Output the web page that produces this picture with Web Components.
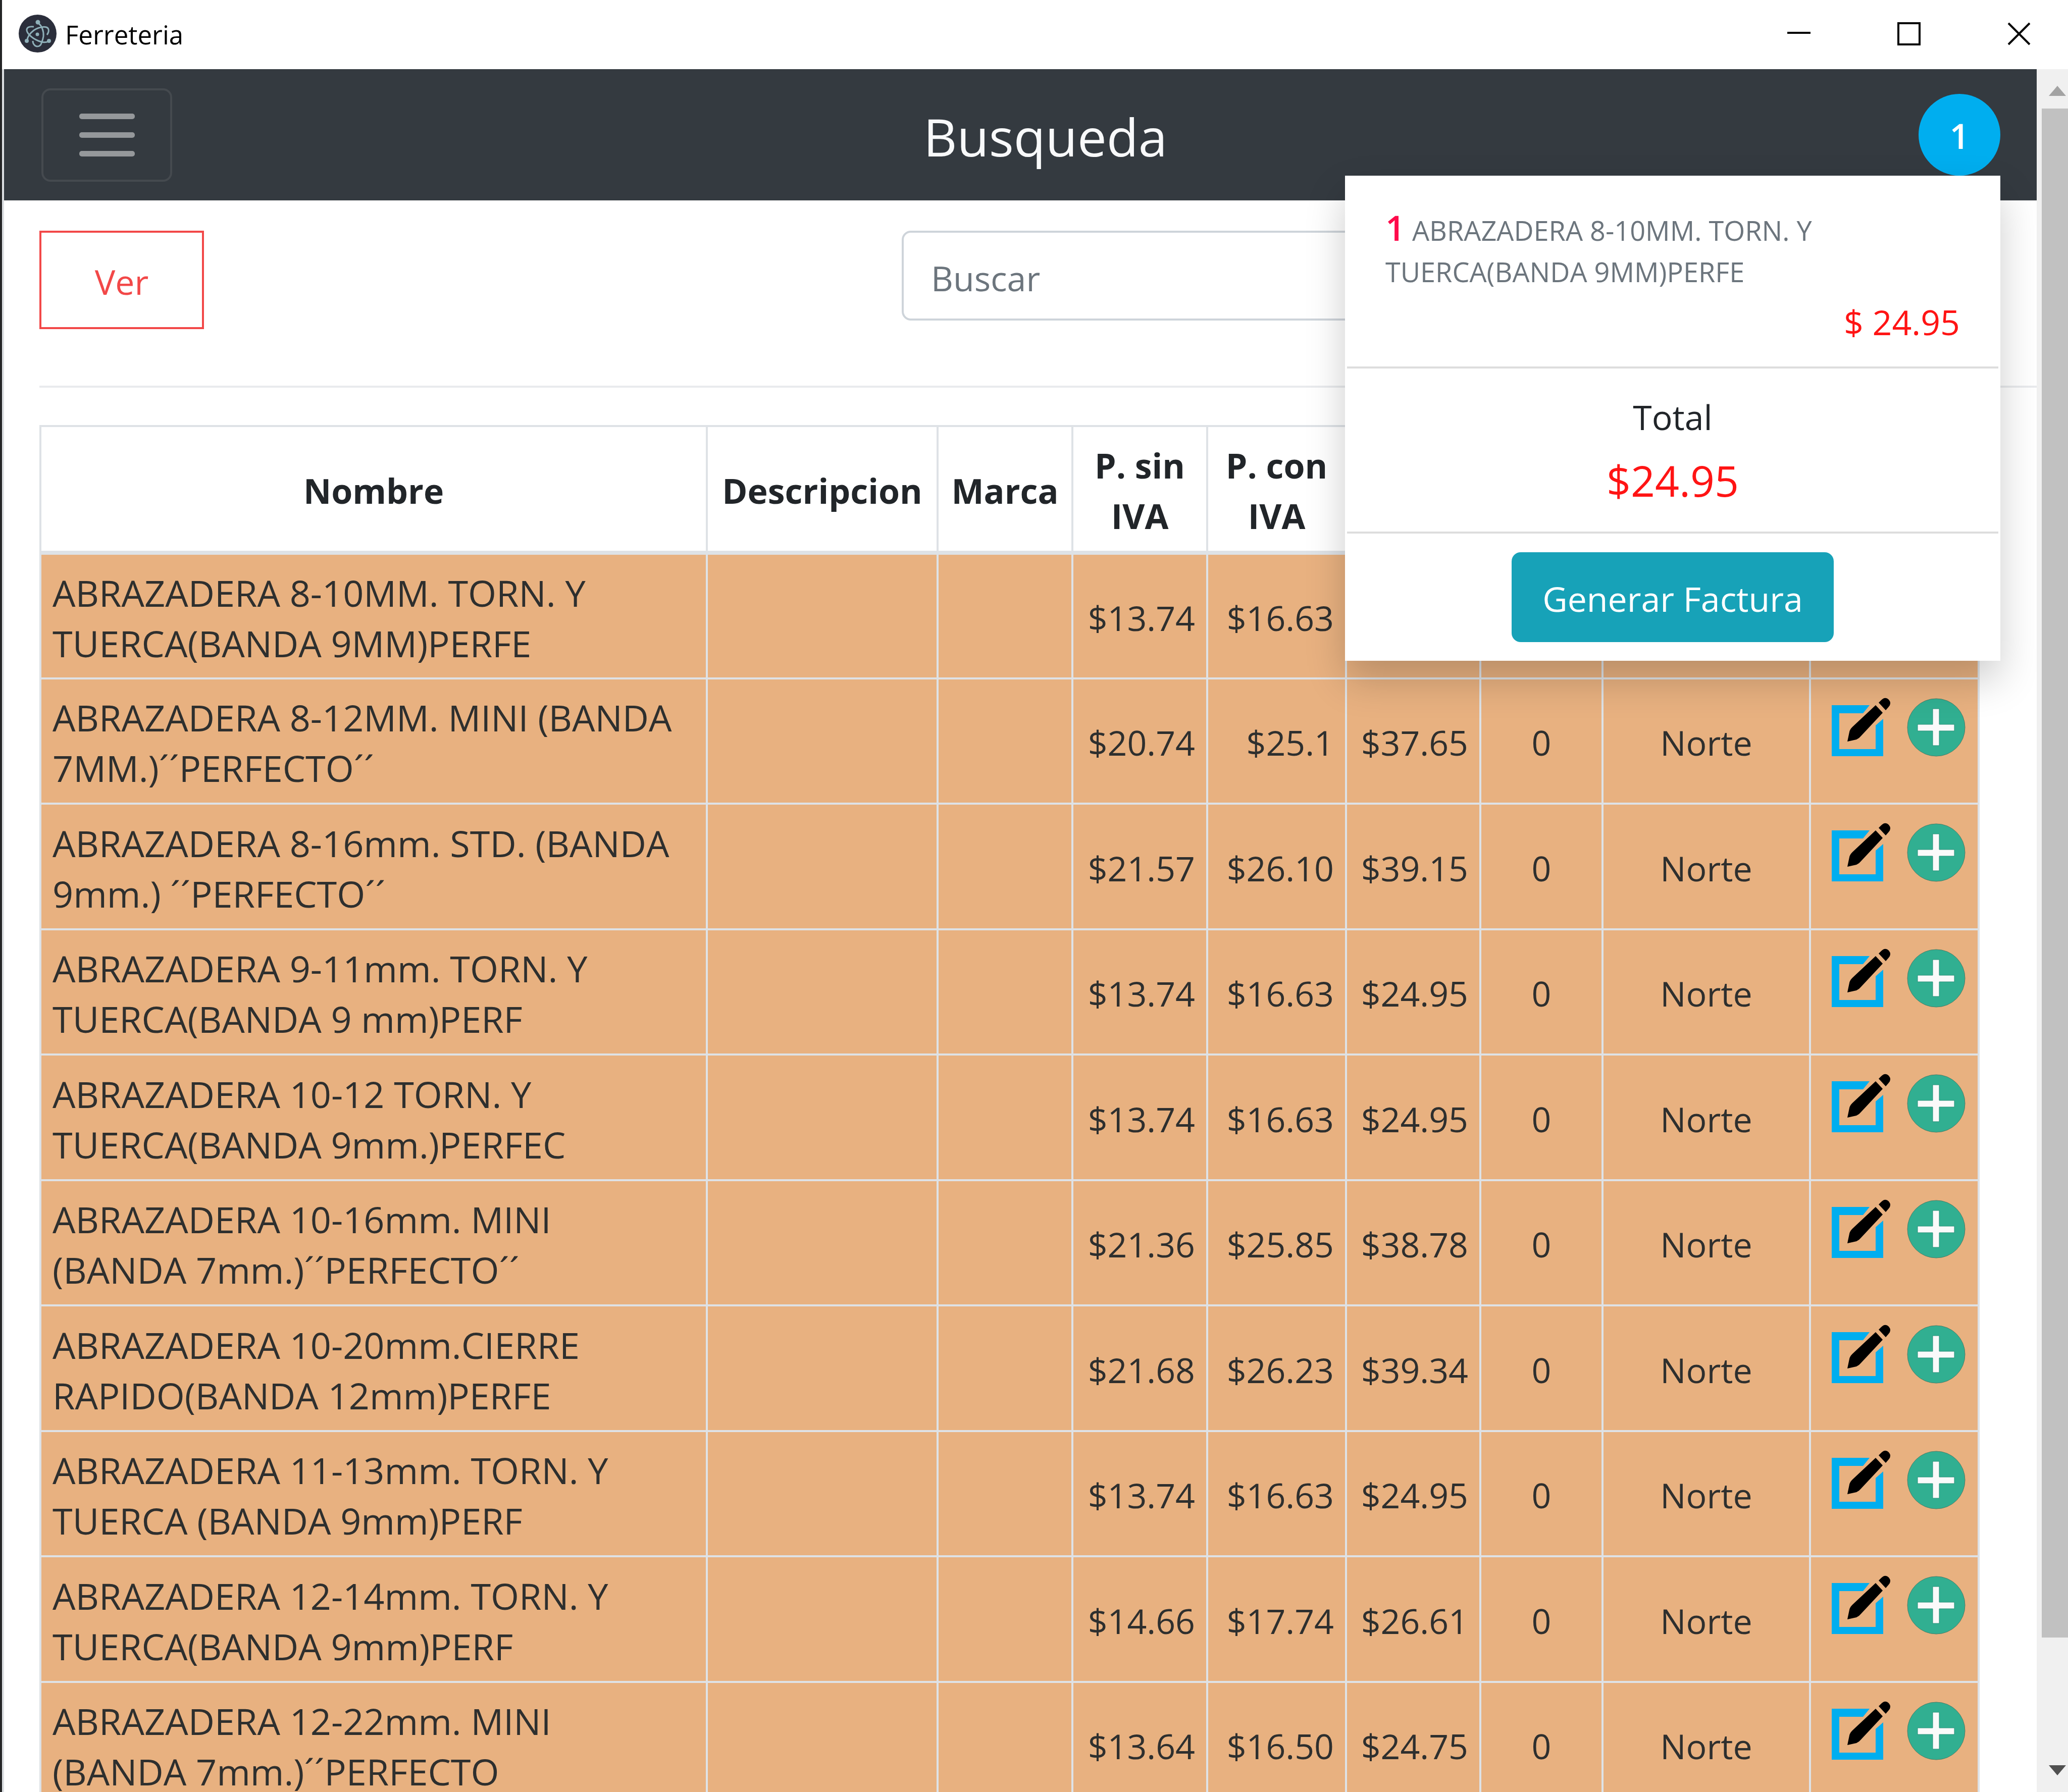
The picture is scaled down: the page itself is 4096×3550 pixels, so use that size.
<!DOCTYPE html>
<html lang="es">
<head>
<meta charset="utf-8">
<title>Ferreteria</title>
<style>
  html, body { margin: 0; height: 100%; overflow: hidden; background: #fff; }
  body { font-family: "Open Sans", "Noto Sans", sans-serif; font-size: 68px; line-height: 100px; color: #212529; }
</style>
</head>
<body>
<app-window>
  <title-bar slot="title">Ferreteria</title-bar>
  <nav-bar>Busqueda
    <cart-menu slot="cart" count="1"></cart-menu>
  </nav-bar>
  <search-toolbar></search-toolbar>
  <product-table></product-table>
</app-window>

<script>
class BaseElement extends HTMLElement {
  connectedCallback() {
    if (this.shadowRoot) return;
    this.attachShadow({ mode: "open" }).innerHTML =
      "<style>*{box-sizing:border-box}button,input{font:inherit;margin:0}</style>" + this.render();
  }
}

class AppWindow extends BaseElement {
  render() {
    return `<style>
      :host { display: flex; flex-direction: column; height: 100vh; box-sizing: border-box; border-left: 4px solid #242526; overflow: hidden; }
      .view { flex: 1; min-height: 0; display: flex; border-left: 4px solid #dcdfe2; }
      main { flex: 1; min-width: 0; overflow: hidden; }
    </style>
    <slot name="title"></slot>
    <div class="view"><main><slot></slot></main><scroll-track></scroll-track></div>`;
  }
}

class TitleBar extends BaseElement {
  render() {
    return `<style>
      :host { display: flex; align-items: center; flex: none; height: 137px; box-sizing: border-box; padding: 0 74px 4px 33px; background: #fff; color: #000; font-size: 51px; }
      .logo { width: 75px; height: 75px; margin-right: 17px; }
      .name { flex: 1; padding-top: 2px; }
      .controls { display: flex; gap: 172px; }
      button { border: 0; padding: 0; background: none; width: 46px; height: 46px; }
      svg { display: block; width: 100%; height: 100%; fill: none; stroke: #000; stroke-width: 4; }
      .logo svg { stroke: #8fb0b9; stroke-width: 3; }
    </style>
    <span class="logo"><svg viewBox="0 0 75 75">
      <circle cx="37.500" cy="37.500" r="37.500" fill="#2b2e3b" stroke="none"/>
      <path d="M30 24C22 23 17 25 16 29C15 36 25 46 39 52C46 55 53 56 59 53"/>
      <path d="M45 25C52 23 58 25 59 29C60 33 59 36 56 40"/>
      <path d="M17 51C17 45 21 38 30 31C36 27 42 25 47 25"/>
      <path d="M39 17C46 22 50 33 49 43C48 50 46 54 44 59C41 64 34 64 31 60C29 58 28 55 28 52"/>
      <circle cx="37" cy="39" r="2" fill="#8fb0b9"/><circle cx="38" cy="15" r="3" fill="#8fb0b9"/>
      <circle cx="16" cy="52" r="2.500" fill="#8fb0b9"/><circle cx="60" cy="52" r="2.500" fill="#8fb0b9"/>
    </svg></span>
    <span class="name"><slot></slot></span>
    <div class="controls">
      <button aria-label="Minimizar"><svg viewBox="0 0 46 46"><path d="M0 21H46"/></svg></button>
      <button aria-label="Maximizar"><svg viewBox="0 0 46 46"><path d="M2 2H44V44H2Z"/></svg></button>
      <button aria-label="Cerrar"><svg viewBox="0 0 46 46"><path d="M2 2L44 44M44 2L2 44"/></svg></button>
    </div>`;
  }
}

class NavBar extends BaseElement {
  render() {
    return `<style>
      :host { display: flex; align-items: center; justify-content: space-between; height: 260px; box-sizing: border-box; padding: 0 72px 0 74px; background: #343a40; }
      .toggle { display: flex; flex-direction: column; align-items: center; justify-content: center; gap: 26px; width: 259px; height: 185px; padding: 0; background: none; border: 4px solid #454a4f; border-radius: 18px; }
      .toggle i { width: 110px; height: 11px; border-radius: 5px; background: #95989b; }
      h1 { margin: 0; padding-top: 6px; font-weight: 400; font-size: 103px; line-height: 140px; color: #f8f9fa; }
    </style>
    <button class="toggle" aria-label="Menu"><i></i><i></i><i></i></button>
    <h1><slot></slot></h1>
    <slot name="cart"></slot>`;
  }
}

class CartMenu extends BaseElement {
  render() {
    return `<style>
      :host { display: block; position: relative; z-index: 2; }
      .badge { display: block; width: 162px; height: 162px; padding: 4px 0 0; border: 0; border-radius: 50%; background: #00aeef; color: #fff; font-weight: 600; }
      cart-panel { position: absolute; top: 100%; right: 0; }
    </style>
    <button class="badge">${this.getAttribute("count")}</button>
    <cart-panel></cart-panel>`;
  }
}

class CartPanel extends BaseElement {
  render() {
    return `<style>
      :host { display: block; width: 1298px; box-sizing: border-box; padding: 0 4px 37px; background: #fff; box-shadow: 0 37px 74px rgba(0,0,0,.2); text-align: center; }
      .item { padding: 62px 76px 29px; text-align: left; }
      .item p { margin: 0; font-size: 54px; line-height: 82px; color: #6c757d; }
      .item b { font-size: 68px; line-height: 82px; font-weight: 600; color: #ff0a4b; margin-right: 14px; }
      .price { text-align: right; color: #ff1414; line-height: 118px; }
      .item, .total { border-bottom: 4px solid #ddd; }
      .total { padding: 46px 0 25px; }
      .total div { line-height: 100px; }
      .total strong { display: block; font-weight: 400; font-size: 84px; line-height: 152px; color: #ff1414; }
      .pay { margin-top: 37px; width: 638px; height: 178px; padding: 6px 0 0; border: 0; border-radius: 18px; background: #17a2b8; color: #fff; display: inline-block; vertical-align: top; }
    </style>
    <div class="item"><p><b>1</b>ABRAZADERA 8-10MM. TORN. Y TUERCA(BANDA 9MM)PERFE</p><div class="price">$ 24.95</div></div>
    <div class="total"><div>Total</div><strong>$24.95</strong></div>
    <button class="pay">Generar Factura</button>`;
  }
}

class SearchToolbar extends BaseElement {
  render() {
    return `<style>
      :host { display: block; padding: 60px 0 0 70px; }
      form { display: grid; grid-template-columns: 4fr 5fr; align-items: start; justify-items: start; margin-right: 113px; }
      button { width: 326px; height: 195px; padding: 6px 0 0; border: 4px solid #f24848; background: #fff; color: #f24848; }
      input { width: 100%; height: 178px; padding: 8px 54px 0; border: 4px solid #ced4da; border-radius: 18px; background: #fff; color: #495057; }
      input::placeholder { color: #6c757d; opacity: 1; }
      hr { margin: 112px 0 74px; border: 0; height: 4px; background: #e9ebed; }
    </style>
    <form><button type="button">Ver</button><input type="search" aria-label="Buscar" placeholder="Buscar"></form>
    <hr>`;
  }
}

class RowActions extends BaseElement {
  render() {
    return `<style>
      :host { display: flex; justify-content: flex-end; gap: 33px; }
      button { border: 0; padding: 0; background: none; width: 116px; height: 116px; }
      svg { display: block; width: 100%; height: 100%; overflow: visible; }
    </style>
    <button aria-label="Editar"><svg viewBox="0 0 116 116">
      <path fill="#00aeef" d="M0 14H75L62 30H15V101H87V54L102 41V115H0Z"/>
      <path d="M31 86L35 67Q36 62 41 57L87 14L101 29L58 75Q54 80 49 82Z"/>
      <path d="M93 9L98 4Q106 -4 113 3Q119 10 113 17L107 24Z"/>
    </svg></button>
    <button aria-label="Agregar"><svg viewBox="0 0 116 116">
      <circle cx="58" cy="58" r="57" fill="#31af91" stroke="#4d7d66" stroke-width="1"/>
      <path fill="#fafafa" stroke="#2a9079" stroke-width="1" d="M51 21H64V52H94V65H64V94H51V65H21V52H51Z"/>
    </svg></button>`;
  }
}

const PRODUCTS = [
  ["ABRAZADERA 8-10MM. TORN. Y TUERCA(BANDA 9MM)PERFE", "$13.74", "$16.63"],
  ["ABRAZADERA 8-12MM. MINI (BANDA 7MM.)´´PERFECTO´´", "$20.74", "$25.1", "$37.65", "0", "Norte"],
  ["ABRAZADERA 8-16mm. STD. (BANDA 9mm.) ´´PERFECTO´´", "$21.57", "$26.10", "$39.15", "0", "Norte"],
  ["ABRAZADERA 9-11mm. TORN. Y TUERCA(BANDA 9 mm)PERF", "$13.74", "$16.63", "$24.95", "0", "Norte"],
  ["ABRAZADERA 10-12 TORN. Y TUERCA(BANDA 9mm.)PERFEC", "$13.74", "$16.63", "$24.95", "0", "Norte"],
  ["ABRAZADERA 10-16mm. MINI (BANDA 7mm.)´´PERFECTO´´", "$21.36", "$25.85", "$38.78", "0", "Norte"],
  ["ABRAZADERA 10-20mm.CIERRE RAPIDO(BANDA 12mm)PERFE", "$21.68", "$26.23", "$39.34", "0", "Norte"],
  ["ABRAZADERA 11-13mm. TORN. Y TUERCA (BANDA 9mm)PERF", "$13.74", "$16.63", "$24.95", "0", "Norte"],
  ["ABRAZADERA 12-14mm. TORN. Y TUERCA(BANDA 9mm)PERF", "$14.66", "$17.74", "$26.61", "0", "Norte"],
  ["ABRAZADERA 12-22mm. MINI (BANDA 7mm.)´´PERFECTO", "$13.64", "$16.50", "$24.75", "0", "Norte"]
];

class ProductTable extends BaseElement {
  render() {
    const row = ([name, net, gross = "", sale = "", stock = "", site = ""]) => `<tr>
      <td class="name">${name}</td><td></td><td></td>
      <td class="num">${net}</td><td class="num">${gross}</td><td class="num">${sale}</td>
      <td>${stock}</td><td>${site}</td><td class="act">${site ? "<row-actions></row-actions>" : ""}</td></tr>`;
    return `<style>
      :host { display: block; padding: 0 113px 0 70px; }
      table { width: 100%; table-layout: fixed; border-collapse: collapse; }
      thead tr { height: 251px; }
      tbody tr { height: 249px; }
      tbody tr:nth-child(even) { height: 248px; }
      th, td { border: 4px solid #dee2e6; padding: 6px 22px 0; text-align: center; vertical-align: middle; }
      th { font-weight: 700; padding: 6px 16px 0; border-bottom-width: 8px; }
      tbody { background: #e8b180; }
      td { color: #2e2f2e; }
      .name { text-align: left; font-size: 72px; padding-right: 44px; }
      .num { text-align: right; }
      .act { vertical-align: top; padding: 37px 24px 0 0; }
    </style>
    <table>
      <colgroup><col><col style="width:457px"><col style="width:267px"><col style="width:267px"><col style="width:275px"><col style="width:266px"><col style="width:242px"><col style="width:411px"><col style="width:334px"></colgroup>
      <thead><tr><th>Nombre</th><th>Descripcion</th><th>Marca</th><th>P. sin IVA</th><th>P. con IVA</th><th></th><th></th><th></th><th></th></tr></thead>
      <tbody>${PRODUCTS.map(row).join("")}</tbody>
    </table>`;
  }
}

class ScrollTrack extends BaseElement {
  render() {
    return `<style>
      :host { display: flex; flex-direction: column; width: 62px; box-sizing: border-box; padding-left: 10px; background: #f0f0f0; }
      svg { display: block; flex: none; width: 42px; height: 78px; margin-left: 10px; }
      .rail { flex: 1; }
      .thumb { height: 93%; background: #c1c1c1; }
    </style>
    <svg viewBox="0 0 42 78"><path fill="#a3a3a3" d="M4 53L21 33L38 53Z"/></svg>
    <div class="rail"><div class="thumb"></div></div>
    <svg viewBox="0 0 42 78"><path fill="#505050" d="M4 25L21 45L38 25Z"/></svg>`;
  }
}

customElements.define("scroll-track", ScrollTrack);
customElements.define("row-actions", RowActions);
customElements.define("cart-panel", CartPanel);
customElements.define("cart-menu", CartMenu);
customElements.define("title-bar", TitleBar);
customElements.define("nav-bar", NavBar);
customElements.define("search-toolbar", SearchToolbar);
customElements.define("product-table", ProductTable);
customElements.define("app-window", AppWindow);
</script>
</body>
</html>
